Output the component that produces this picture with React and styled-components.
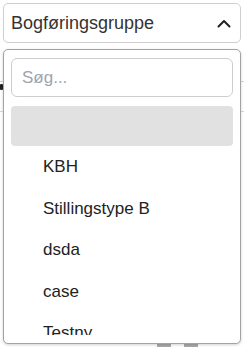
import React from "react";
import styled, { createGlobalStyle } from "styled-components";

const Global = createGlobalStyle`
  html, body { margin: 0; padding: 0; background: #fff; }
  body { font-family: "Liberation Sans", Arial, sans-serif; }
`;

const Page = styled.div`
  position: relative;
  width: 244px;
  height: 347px;
  overflow: hidden;
  padding: 3px;
  box-sizing: border-box;
`;

const Trigger = styled.div`
  height: 40px;
  box-sizing: border-box;
  border: 1px solid #cfcfcf;
  border-radius: 5px;
  display: flex;
  align-items: center;
  justify-content: space-between;
  padding: 0 9px 0 7px;
  font-size: 18px;
  color: #333;
`;

const Backdrop = styled.div`
  display: flex;
  flex-direction: column;
`;

const Divider = styled.div`
  height: 1px;
  background: #d6d6d6;
  margin-top: ${(p) => p.$top}px;
  margin-left: -3px;
  margin-right: -3px;
`;

const Mark = styled.div`
  width: 3px;
  height: 6px;
  background: #222;
  border-radius: 1px;
  margin-left: -3px;
  margin-top: 2px;
`;

const Blocks = styled.div`
  display: flex;
  gap: 13px;
  margin-left: 154px;
  margin-top: 228px;
`;

const Block = styled.div`
  width: 14px;
  height: 8px;
  background: #a9a9a9;
`;

const Panel = styled.div`
  position: absolute;
  left: 3px;
  top: 49px;
  width: 238px;
  height: 295px;
  box-sizing: border-box;
  border: 1px solid #a3a3a3;
  border-radius: 5px;
  background: #fff;
  box-shadow: 0 1px 3px rgba(0, 0, 0, 0.18);
  padding: 8px 7px 8px 7px;
  display: flex;
  flex-direction: column;
  gap: 9px;
`;

const Search = styled.input`
  height: 39px;
  box-sizing: border-box;
  border: 1px solid #cdcdcd;
  border-radius: 6px;
  padding: 0 10px;
  font-family: inherit;
  font-size: 17px;
  color: #333;
  outline: none;
  flex-shrink: 0;
  &::placeholder { color: #9ea4ad; }
`;

const List = styled.div`
  flex: 1;
  overflow: hidden;
  display: flex;
  flex-direction: column;
`;

const Option = styled.div`
  flex-shrink: 0;
  padding: 11px 32px;
  font-size: 17px;
  line-height: 19.5px;
  color: #222;
  border-radius: 4px;
  ${(p) => p.$empty && `height: 40px; box-sizing: border-box; padding: 0; background: #e1e1e1;`}
`;

const Chevron = () => (
  <svg width="14" height="9" viewBox="0 0 14 9" fill="none">
    <path d="M1.5 7.5 L7 2 L12.5 7.5" stroke="#222" strokeWidth="2" strokeLinecap="round" strokeLinejoin="round" />
  </svg>
);

const options = ["KBH", "Stillingstype B", "dsda", "case", "Testny"];

export default function App() {
  return (
    <>
      <Global />
      <Page>
        <Trigger>
          <span>Bogføringsgruppe</span>
          <Chevron />
        </Trigger>
        <Backdrop>
          <Divider $top={38} />
          <Mark />
          <Divider $top={21} />
          <Blocks>
            <Block />
            <Block />
          </Blocks>
        </Backdrop>
        <Panel>
          <Search placeholder="Søg..." />
          <List>
            <Option $empty />
            {options.map((o) => (
              <Option key={o}>{o}</Option>
            ))}
          </List>
        </Panel>
      </Page>
    </>
  );
}
